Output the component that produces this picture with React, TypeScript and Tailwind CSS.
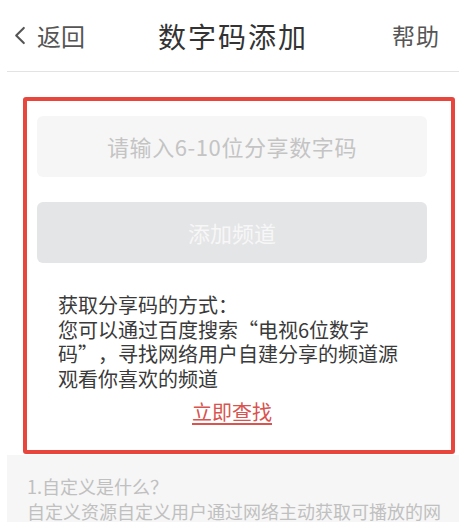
export default function App() {
  const font = { fontFamily: '"Noto Sans CJK SC", "Noto Sans", sans-serif' };
  return (
    <div lang="zh-CN" className="h-[522px] w-[466px] overflow-hidden bg-white" style={font}>
      {/* 顶部导航 */}
      <div className="relative flex h-[71px] items-center px-[14px]">
        <div className="flex items-center gap-[11px] text-[24px] text-[#555]">
          <svg viewBox="0 0 12 20" className="h-[19px] w-[12px]" fill="none" stroke="#555" strokeWidth="2.2" strokeLinecap="round" strokeLinejoin="round">
            <polyline points="10,2 2,10 10,18" />
          </svg>
          <span>返回</span>
        </div>
        <div className="absolute left-1/2 -translate-x-1/2 text-[28px] tracking-[2px] text-[#333]">数字码添加</div>
        <div className="ml-auto mr-[12px] text-[23px] tracking-[1px] text-[#555]">帮助</div>
      </div>
      <div className="mx-[7px] h-px bg-[#e3e3e3]" />

      {/* 红框区域 */}
      <div className="ml-[23px] mt-[25px] w-[432px] rounded-[3px] border-4 border-[#e8453c] pb-[26px] pt-[15px]">
        <div className="ml-[10px] flex h-[61px] w-[390px] items-center justify-center rounded-[6px] bg-[#f6f6f6] text-[22px] tracking-[0.6px] text-[#c4c4c4]">
          请输入6-10位分享数字码
        </div>
        <div className="ml-[10px] mt-[25px] flex h-[61px] w-[390px] items-center justify-center rounded-[6px] bg-[#e4e5e6] text-[22px] text-[#f7f7f7]">
          添加频道
        </div>
        <div className="ml-[31px] mt-[30px] whitespace-nowrap text-[20px] leading-[24.5px] text-[#3a3a3a]">
          <div>获取分享码的方式：</div>
          <div>
            您可以通过百度搜索<span className="inline-block w-[1em] text-right">“</span>电视6位数字
          </div>
          <div>
            码<span className="inline-block w-[1em] text-center">”</span>
            <span className="inline-block w-[1em]">，</span>寻找网络用户自建分享的频道源
          </div>
          <div>观看你喜欢的频道</div>
        </div>
        <div className="mt-[9px] flex justify-center pr-[14px]">
          <span className="text-[20px] leading-[24px] text-[#d9534f] underline decoration-[1.5px] underline-offset-[3px]">立即查找</span>
        </div>
      </div>

      {/* 说明区域 */}
      <div className="mx-[7px] mt-px whitespace-nowrap bg-[#f6f6f6] px-[20px] pb-[20px] pt-[19px] text-[18px] leading-[25px] text-[#c0c0c0]">
        <div>1.自定义是什么？</div>
        <div>自定义资源自定义用户通过网络主动获取可播放的网</div>
        <div>络资源，这类资源我们叫做自定义资源</div>
      </div>
    </div>
  );
}
